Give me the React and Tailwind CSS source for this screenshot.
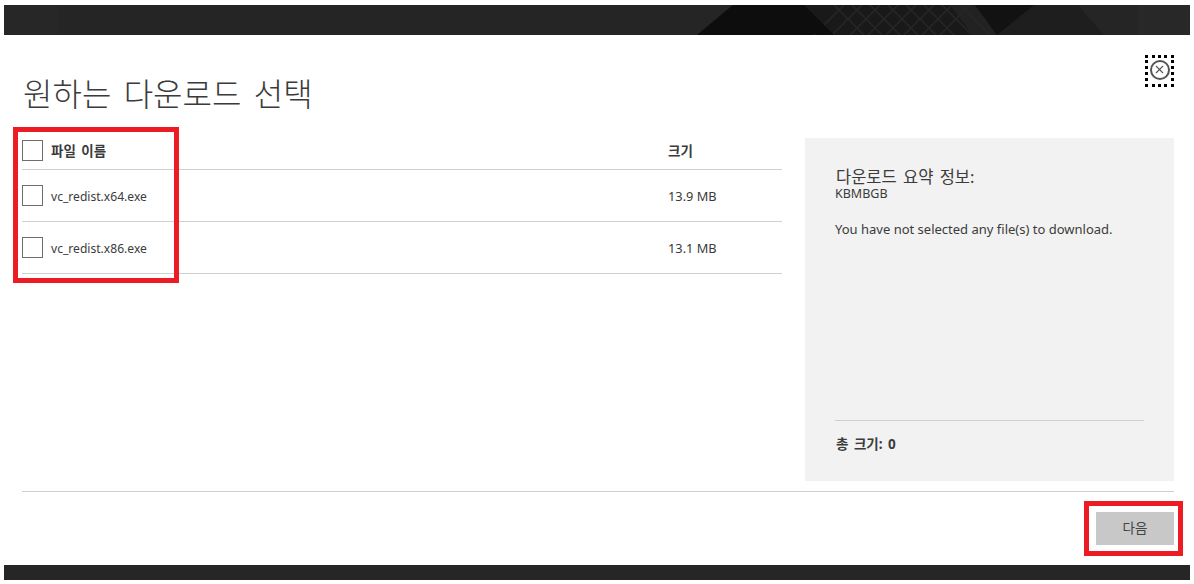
import { X } from 'lucide-react'

const FONT = "font-['Noto_Sans','Noto_Sans_CJK_KR',sans-serif]"

const files = [
  { name: 'vc_redist.x64.exe', size: '13.9 MB' },
  { name: 'vc_redist.x86.exe', size: '13.1 MB' },
]

function Checkbox() {
  return <div className="w-[21px] h-[21px] border border-[#6e6e6e] bg-white shrink-0" />
}

// dark laptop photo behind the top band, coords are page x minus 4 and y minus 5
function HeaderArt() {
  const keys = [830, 848, 866, 884, 902, 920, 938, 956]
  return (
    <svg className="block w-full h-full" viewBox="0 0 1186 30" preserveAspectRatio="none">
      <rect width="1186" height="30" fill="#252525" />
      <rect x="1134" width="52" height="30" fill="#282828" />
      <rect width="54" height="30" fill="#272727" />
      <polygon points="693,30 729,0 1074,0 1100,30" fill="#1e1e1e" />
      <polygon points="693,30 729,0 800,0 830,30" fill="#0d0d0d" />
      <polygon points="800,0 946,0 969,30 830,30" fill="#191919" />
      <polygon points="946,0 971,0 993,30 969,30" fill="#222222" />
      <polygon points="971,0 1030,0 993,30" fill="#121212" />
      <g stroke="#262626" strokeWidth="1.5">
        {keys.map(x => (
          <line key={x} x1={x} y1="0" x2={x + 30} y2="30" />
        ))}
        {keys.map(x => (
          <line key={x} x1={x + 10} y1="0" x2={x - 20} y2="30" />
        ))}
      </g>
      <polygon points="780,0 800,0 830,30 812,30" fill="#0d0d0d" />
    </svg>
  )
}

export default function App() {
  return (
    <div className={`${FONT} w-[1194px] h-[584px] bg-white pt-[5px] px-1 pb-1 text-[#3b3b3b] overflow-hidden relative`}>
      <div className="flex flex-col h-full">
        <div className="h-[30px] shrink-0">
          <HeaderArt />
        </div>

        <div className="flex-1 pl-[18px] pr-[16px] relative">
          <h1 className="text-[32px] leading-[44px] font-light [word-spacing:4px] pt-[37px] h-[81px] ml-px">원하는 다운로드 선택</h1>

          <div className="flex gap-[23px] mt-[22px] h-[343px]">
            {/* file table */}
            <div className="w-[760px] shrink-0">
              <div className="flex items-center h-[32px] border-b border-[#d0d0d0] pb-[6px]">
                <Checkbox />
                <span className="ml-2 text-[13.5px] font-bold flex-1 [word-spacing:2px] pt-0.5">파일 이름</span>
                <span className="w-[114px] text-[13.5px] font-bold pt-0.5">크기</span>
              </div>
              {files.map(f => (
                <div key={f.name} className="flex items-center h-[52px] border-b border-[#d0d0d0] text-[12px]">
                  <Checkbox />
                  <span className="ml-2 flex-1 pt-[3px] text-[12.1px]">{f.name}</span>
                  <span className="w-[114px] text-[12.8px] pt-0.5">{f.size}</span>
                </div>
              ))}
            </div>

            {/* summary */}
            <div className="w-[369px] shrink-0 bg-[#f2f2f2] px-[30px] flex flex-col">
              <p className="text-[16.5px] leading-[20px] mt-[29px] [word-spacing:2px] ml-px">다운로드 요약 정보:</p>
              <p className="text-[12.5px] leading-[14px]">KBMBGB</p>
              <p className="text-[13px] leading-[18px] mt-[19px]">You have not selected any file(s) to download.</p>
              <div className="mt-auto border-t border-[#d0d0d0] h-[61px] pt-[14px] text-[13.5px] leading-[18px] font-bold [word-spacing:2px] pl-px">총 크기: 0</div>
            </div>
          </div>

          <div className="border-t border-[#d0d0d0] mt-[10px] pt-5 flex justify-end">
            <button className="w-[78px] h-[33px] bg-[#c8c8c8] text-[13.5px] text-[#444444]">다음</button>
          </div>

          {/* focused close button */}
          <div className="absolute right-[16px] top-[20px] w-[29px] h-[32px] pb-[3px] border-[3px] border-dotted border-black flex items-center justify-center">
            <div className="w-[20px] h-[20px] rounded-full border-2 border-[#555555] flex items-center justify-center">
              <X size={13} strokeWidth={2} className="text-[#555555]" />
            </div>
          </div>
        </div>

        <div className="h-[15px] bg-[#262626] shrink-0" />
      </div>

      {/* red annotation boxes */}
      <div className="absolute left-[13px] top-[127px] w-[166px] h-[156px] border-[5px] border-[#ed1c24]" />
      <div className="absolute left-[1084px] top-[501px] w-[99px] h-[55px] border-[5px] border-[#ed1c24]" />
    </div>
  )
}
